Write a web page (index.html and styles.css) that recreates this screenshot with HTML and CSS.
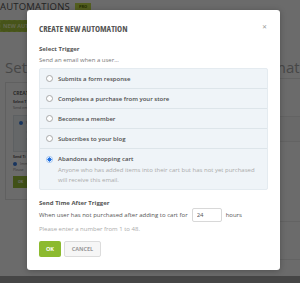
FILE: index.html
```html
<!DOCTYPE html>
<html lang="en">

<head>
    <meta charset="UTF-8">
    <meta name="viewport" content="width=device-width, initial-scale=1.0">
    <title>Create New Automation</title>
    <link rel="stylesheet" href="styles.css">
</head>

<body>
<div class="page">
    <header class="topbar">
        <h1>AUTOMATIONS</h1>
        <span class="badge">PRO</span>
    </header>
    <div class="toolbar">
        <button class="new-btn">NEW AUTOMATION</button>
    </div>

    <div class="columns">
        <section class="col-left">
            <h2>Set a trigger</h2>
            <div class="preview">
                <div class="p-title">CREATE</div>
                <div class="p-label">Select T</div>
                <div class="p-text">Send em</div>
                <div class="p-box">
                    <div class="p-row"><span class="p-dot"></span>Sub</div>
                    <div class="p-line"></div>
                    <div class="p-line short"></div>
                </div>
                <div class="p-label">Send Ti</div>
                <div class="p-row"><span class="p-dot"></span>Imm</div>
                <div class="p-text">Please</div>
                <span class="p-btn">OK</span>
            </div>
        </section>

        <section class="col-right">
            <h2>Automatic</h2>
            <div class="list">
                <div class="list-row"><span class="tiny">awesome</span></div>
                <div class="list-row tall"></div>
                <div class="list-row product">
                    <span class="plant"></span>
                    <span class="tiny">add to cart</span>
                    <span class="green-bar"></span>
                </div>
                <div class="list-row"></div>
            </div>
        </section>
    </div>
    <footer class="foot"></footer>
</div>

<div class="overlay"></div>

<div class="modal">
    <span class="close">&#x2715;</span>
    <h3>CREATE NEW AUTOMATION</h3>

    <div class="field-label">Select Trigger</div>
    <div class="hint">Send an email when a user...</div>

    <div class="options">
        <label class="option">
            <input type="radio" name="trigger">
            <span class="radio"></span>
            Submits a form response
        </label>
        <label class="option">
            <input type="radio" name="trigger">
            <span class="radio"></span>
            Completes a purchase from your store
        </label>
        <label class="option">
            <input type="radio" name="trigger">
            <span class="radio"></span>
            Becomes a member
        </label>
        <label class="option">
            <input type="radio" name="trigger">
            <span class="radio"></span>
            Subscribes to your blog
        </label>
        <label class="option selected">
            <input type="radio" name="trigger" checked>
            <span class="radio"></span>
            <span class="option-body">
                Abandons a shopping cart
                <span class="desc">Anyone who has added items into their cart but has not yet purchased will receive this email.</span>
            </span>
        </label>
    </div>

    <div class="field-label second">Send Time After Trigger</div>
    <div class="delay-row">
        When user has not purchased after adding to cart for
        <input type="text" class="hours" value="24">
        hours
    </div>
    <div class="note">Please enter a number from 1 to 48.</div>

    <div class="actions">
        <button class="btn-ok">OK</button>
        <button class="btn-cancel">CANCEL</button>
    </div>
</div>
</body>

</html>
```

FILE: styles.css
```css
body {
    margin: 0;
    width: 300px;
    height: 283px;
    overflow: hidden;
    font-family: 'Open Sans', 'Liberation Sans', sans-serif;
    background-color: #fff;
    position: relative;
}

/* background page */
.page {
    width: 300px;
    height: 283px;
    display: flex;
    flex-direction: column;
    overflow: hidden;
}

.topbar {
    display: flex;
    align-items: center;
    gap: 5px;
    height: 13px;
}

.topbar h1 {
    margin: 0;
    font-size: 9.5px;
    font-weight: 400;
    color: #555;
    letter-spacing: 0.2px;
    line-height: 13px;
}

.badge {
    font-size: 4px;
    font-weight: 700;
    color: #556b00;
    background-color: #c5e04a;
    padding: 1px 4px;
    line-height: 5px;
}

.toolbar {
    padding-top: 7px;
}

.new-btn {
    display: block;
    height: 12px;
    width: 60px;
    padding: 0 2px;
    border: 1px dashed #b8d64a;
    background-color: #a9c93c;
    color: #eaf3b8;
    font-family: inherit;
    font-size: 5.5px;
    font-weight: 700;
    text-align: left;
    white-space: nowrap;
}

.columns {
    display: grid;
    grid-template-columns: 226px 200px;
    gap: 8px;
    padding-left: 5px;
    padding-top: 25px;
}

.columns h2 {
    margin: 0;
    font-size: 15px;
    font-weight: 400;
    color: #aaa;
    line-height: 20px;
    white-space: nowrap;
}

.preview {
    margin-top: 5px;
    height: 118px;
    box-sizing: border-box;
    border: 1px solid #e4e4e4;
    padding: 6px 7px;
    font-size: 3.5px;
    color: #888;
}

.p-title {
    font-size: 5px;
    font-weight: 700;
    color: #666;
    line-height: 8px;
}

.p-label {
    font-weight: 700;
    color: #555;
    line-height: 6px;
    margin-top: 2px;
}

.p-text {
    line-height: 6px;
}

.p-box {
    margin-top: 4px;
    height: 37px;
    box-sizing: border-box;
    border: 1px solid #dde5ea;
    background-color: #f1f5f8;
    padding: 3px 5px;
}

.p-row {
    display: flex;
    align-items: center;
    gap: 3px;
    line-height: 7px;
}

.p-dot {
    width: 4px;
    height: 4px;
    border-radius: 50%;
    background-color: #3d7fe0;
}

.p-line {
    height: 2px;
    width: 30px;
    margin: 5px 0 0 7px;
    background-color: #e2e8ec;
}

.p-line.short {
    width: 20px;
}

.p-btn {
    display: inline-block;
    margin-top: 3px;
    width: 15px;
    height: 12px;
    background-color: #9cc03a;
    color: #fff;
    font-weight: 700;
    text-align: center;
    line-height: 12px;
}

.list {
    margin-top: 1px;
    border-top: 1px solid #e6e6e6;
}

.list-row {
    height: 38px;
    border-bottom: 1px solid #ececec;
    padding: 6px 6px 0;
    box-sizing: border-box;
    display: flex;
    flex-direction: column;
    align-items: flex-end;
}

.list-row.tall {
    height: 25px;
    background-color: #f9f9f9;
}

.list-row.product {
    height: 80px;
    padding-top: 10px;
    gap: 4px;
}

.tiny {
    font-size: 3.5px;
    color: #777;
}

.plant {
    width: 16px;
    height: 24px;
    border-radius: 40% 40% 20% 20%;
    background: radial-gradient(circle at 50% 80%, #b8d23a 30%, #6d7a5a 60%, #9aa090 100%);
}

.green-bar {
    width: 60px;
    height: 11px;
    background-color: #a6c63d;
}

.foot {
    margin-top: auto;
    height: 7px;
    background-color: #a8a8a8;
}

.overlay {
    position: absolute;
    inset: 0;
    background-color: rgba(0, 0, 0, 0.58);
}

/* modal */
.modal {
    position: absolute;
    left: 27px;
    top: 10px;
    width: 253px;
    height: 260px;
    box-sizing: border-box;
    padding: 12px 12px 0;
    background-color: #fff;
    border-radius: 3px;
    box-shadow: 0 1px 6px rgba(0, 0, 0, 0.25);
    color: #555;
}

.close {
    position: absolute;
    top: 14px;
    right: 13px;
    font-size: 6px;
    line-height: 6px;
    color: #999;
}

.modal h3 {
    margin: 0;
    font-size: 8.6px;
    font-weight: 700;
    font-stretch: 80%;
    line-height: 14px;
    color: #555;
}

.field-label {
    margin-top: 8px;
    font-size: 6px;
    font-weight: 700;
    line-height: 10px;
    color: #555;
}

.hint {
    margin-top: 1px;
    font-size: 6px;
    line-height: 10px;
    color: #777;
}

.options {
    margin-top: 3px;
    background-color: #eff4f8;
    border: 1px solid #e4ebf0;
    border-radius: 2px;
}

.option {
    display: flex;
    align-items: center;
    height: 19px;
    padding-left: 6px;
    font-size: 6px;
    font-weight: 600;
    color: #4d4d4d;
    border-bottom: 1px solid #dde5ea;
}

.option input {
    display: none;
}

.radio {
    flex: none;
    width: 7px;
    height: 7px;
    box-sizing: border-box;
    margin-right: 5px;
    border: 1px solid #a9a9a9;
    border-radius: 50%;
    background-color: #fff;
}

.option.selected {
    align-items: flex-start;
    height: auto;
    padding-top: 6px;
    padding-bottom: 4px;
    border-bottom: none;
}

.option.selected .radio {
    margin-top: 0.5px;
    border: 1px solid #9cc2f2;
    background: radial-gradient(circle, #1f6fe0 55%, #fff 62%);
}

.option-body {
    display: flex;
    flex-direction: column;
    line-height: 8px;
}

.desc {
    margin-top: 2px;
    padding-right: 9px;
    font-weight: 400;
    line-height: 10px;
    color: #aaa;
}

.delay-row {
    display: flex;
    align-items: center;
    gap: 4px;
    font-size: 6px;
    color: #555;
    height: 14px;
}

.hours {
    width: 30px;
    height: 14px;
    box-sizing: border-box;
    padding: 0 4px;
    border: 1px solid #d8d8d8;
    border-radius: 2px;
    font-family: inherit;
    font-size: 6px;
    color: #555;
}

.note {
    margin-top: 2px;
    font-size: 6px;
    line-height: 10px;
    color: #aaa;
}

.actions {
    display: flex;
    gap: 3px;
    margin-top: 7px;
}

.actions button {
    height: 16px;
    padding: 0;
    border-radius: 2px;
    font-family: inherit;
    font-size: 5.5px;
    font-weight: 700;
    cursor: pointer;
}

.btn-ok {
    width: 22px;
    border: none;
    background-color: #8cba2f;
    color: #fff;
}

.btn-cancel {
    width: 37px;
    border: 1px solid #dcdcdc;
    background-color: #f6f6f6;
    color: #999;
}
```
